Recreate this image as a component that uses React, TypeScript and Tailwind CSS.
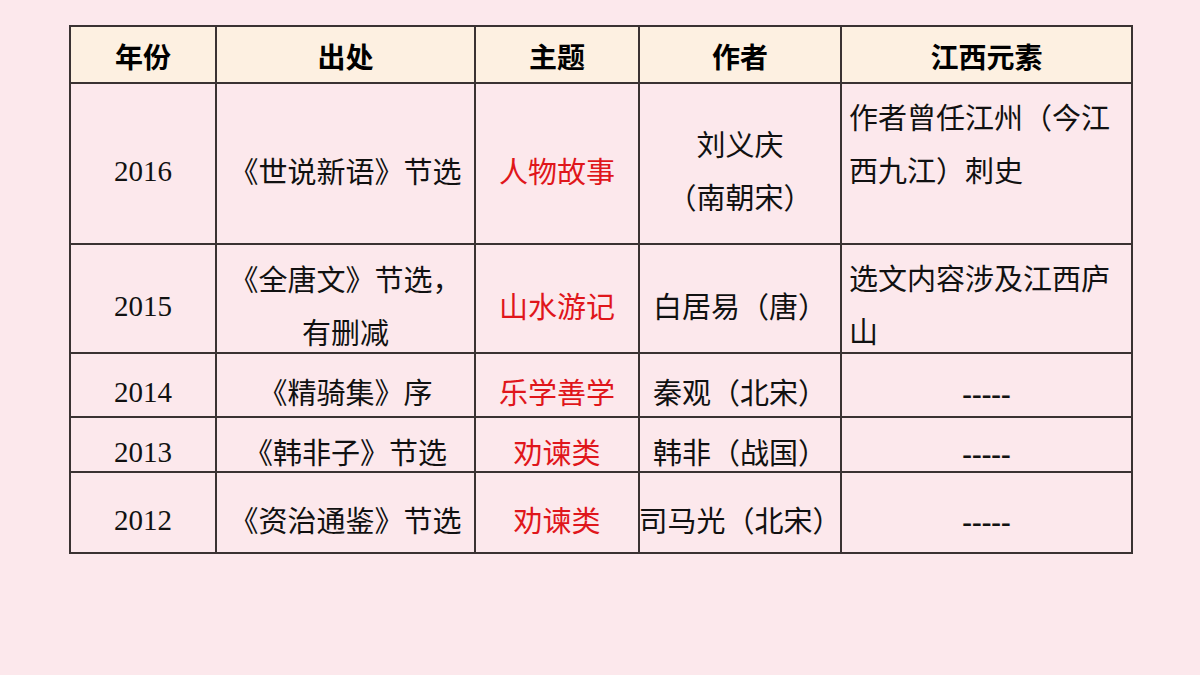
type Row = {
  year: string;
  source: string[];
  theme: string;
  author: string[];
  jiangxi: string[];
  h: string;
};

const ROWS: Row[] = [
  { year: "2016", source: ["《世说新语》节选"], theme: "人物故事", author: ["刘义庆", "（南朝宋）"], jiangxi: ["作者曾任江州（今江", "西九江）刺史"], h: "h-[161px]" },
  { year: "2015", source: ["《全唐文》节选，", "有删减"], theme: "山水游记", author: ["白居易（唐）"], jiangxi: ["选文内容涉及江西庐", "山"], h: "h-[109px]" },
  { year: "2014", source: ["《精骑集》序"], theme: "乐学善学", author: ["秦观（北宋）"], jiangxi: [], h: "h-[64px]" },
  { year: "2013", source: ["《韩非子》节选"], theme: "劝谏类", author: ["韩非（战国）"], jiangxi: [], h: "h-[55px]" },
  { year: "2012", source: ["《资治通鉴》节选"], theme: "劝谏类", author: ["司马光（北宋）"], jiangxi: [], h: "h-[81px]" },
];

const HEAD = ["年份", "出处", "主题", "作者", "江西元素"];

const cell = "border-2 border-[#3a3232] p-0";

function Lines({ items }: { items: string[] }) {
  return (
    <div className="flex flex-col gap-[23px] whitespace-nowrap">
      {items.map((s) => <div key={s}>{s}</div>)}
    </div>
  );
}

export default function App() {
  return (
    <div className="h-[675px] w-[1200px] overflow-hidden bg-[#fce8ec] pl-[69px] pt-[25px]">
      <table className="w-[1062px] table-fixed border-collapse">
        <colgroup>
          <col className="w-[146px]" />
          <col className="w-[259px]" />
          <col className="w-[164px]" />
          <col className="w-[202px]" />
          <col className="w-[291px]" />
        </colgroup>
        <thead>
          <tr className="h-[57px] bg-[#fdf0e1]">
            {HEAD.map((t) => (
              <th key={t} className={`${cell} pt-[3px] text-center align-middle font-['Noto_Sans_CJK_SC',sans-serif] text-[28px] font-bold leading-none text-black`}>
                {t}
              </th>
            ))}
          </tr>
        </thead>
        <tbody className="bg-[#fce8ec] font-['Liberation_Serif','Noto_Sans_CJK_SC',serif] text-[29px] leading-[30px] text-[#111]">
          {ROWS.map((r) => (
            <tr key={r.year} className={r.h}>
              <td className={`${cell} pt-[14px] text-center align-middle`}>{r.year}</td>
              <td className={`${cell} pt-[18px] text-center align-middle`}>
                <Lines items={r.source} />
              </td>
              <td className={`${cell} pt-[18px] text-center align-middle text-[#e0161b]`}>{r.theme}</td>
              <td className={`${cell} pt-[18px] text-center align-middle`}>
                <div className="-mx-4">
                  <Lines items={r.author} />
                </div>
              </td>
              {r.jiangxi.length > 0 ? (
                <td className={`${cell} pl-[7px] pt-[20px] text-left align-top`}>
                  <Lines items={r.jiangxi} />
                </td>
              ) : (
                <td className={`${cell} pt-[18px] text-center align-middle font-bold`}>-----</td>
              )}
            </tr>
          ))}
        </tbody>
      </table>
    </div>
  );
}
